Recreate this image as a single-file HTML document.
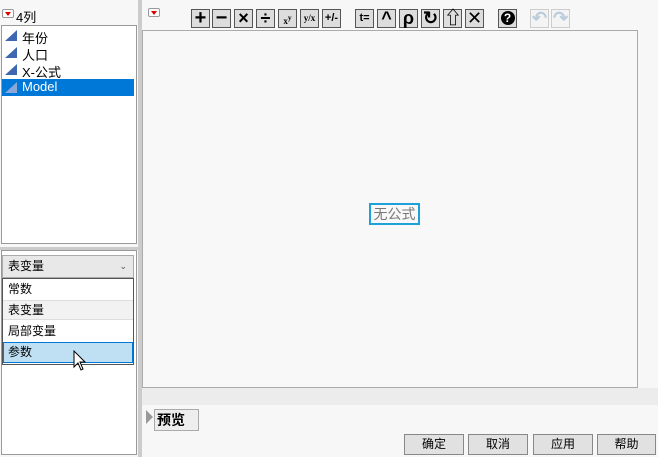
<!DOCTYPE html><html><head><meta charset="utf-8"><style>
*{box-sizing:border-box}
body{margin:0;width:658px;height:457px;background:#f7f7f7;font-family:"Liberation Sans","Noto Sans CJK SC",sans-serif;font-size:12px;position:relative;overflow:hidden;color:#000}
.a{position:absolute}
.tri{width:12px;height:9px;border:1px solid #999;border-radius:2px;background:#fff}
.tri:after{content:"";position:absolute;left:2px;top:2px;border-left:3px solid transparent;border-right:3px solid transparent;border-top:4px solid #d00}
.tb{position:absolute;top:9px;width:19px;height:19px;border:1px solid #555;background:#ddd;font-weight:bold;font-size:18px;line-height:16px;text-align:center}
.btn{position:absolute;top:434px;height:21px;border:1px solid #888;background:#e1e1e1;text-align:center;line-height:19px;font-size:12px}
.it{position:absolute;left:3px;height:20px;width:130px;line-height:20px;padding-left:5px}
.ic{position:absolute;left:5px;width:0;height:0;border-left:12px solid transparent;border-bottom:11px solid #3f66b0}
</style></head><body>
<div class="a tri" style="left:2px;top:9px"></div><div class="a" style="left:16px;top:7px;font-size:13px">4列</div>
<div class="a" style="left:1px;top:25px;width:136px;height:219px;border:1px solid #999;background:#fff"></div>
<div class="ic" style="top:30px"></div><div class="a" style="left:22px;top:28px;font-size:13px">年份</div>
<div class="ic" style="top:47px"></div><div class="a" style="left:22px;top:45px;font-size:13px">人口</div>
<div class="ic" style="top:64px"></div><div class="a" style="left:22px;top:62px;font-size:13px">X-公式</div>
<div class="a" style="left:2px;top:79px;width:132px;height:17px;background:#0078d7"></div>
<div class="a" style="left:5px;top:82px;width:0;height:0;border-left:12px solid transparent;border-bottom:11px solid #8aa8d8"></div>
<div class="a" style="left:22px;top:79px;font-size:13px;color:#fff">Model</div>
<div class="a" style="left:0;top:247px;width:138px;height:3px;background:#ccc"></div>
<div class="a" style="left:138px;top:0;width:4px;height:457px;background:#ccc"></div>
<div class="a" style="left:1px;top:250px;width:136px;height:205px;border:1px solid #999;background:#fff"></div>
<div class="a" style="left:2px;top:255px;width:132px;height:23px;border:1px solid #aaa;background:#e8e8e8;line-height:21px;padding-left:5px">表变量<span style="position:absolute;right:6px;font-size:9px;color:#555">⌄</span></div>
<div class="a" style="left:2px;top:278px;width:132px;height:87px;border:1px solid #555;background:#fff"></div>
<div class="it" style="top:279px">常数</div>
<div class="it" style="top:300px;background:#f2f2f2;border-top:1px solid #ddd;border-bottom:1px solid #ddd;line-height:18px">表变量</div>
<div class="it" style="top:321px">局部变量</div>
<div class="it" style="top:342px;background:#bfe0f3;border:1px solid #0078d7;height:21px;padding-left:4px;line-height:19px">参数</div>
<svg class="a" style="left:73px;top:350px" width="14" height="22"><path d="M1 1 L1 17 L5 13 L8 20 L10 19 L7 12 L12 12 Z" fill="#fff" stroke="#000"/></svg>
<div class="a tri" style="left:148px;top:8px"></div>
<div class="tb" style="left:191px;font-size:20px">+</div><div class="tb" style="left:212px;font-size:20px">−</div><div class="tb" style="left:234px">×</div><div class="tb" style="left:256px">÷</div>
<div class="tb" style="left:278px;font-size:9px;font-family:'Liberation Serif',serif">x<sup>y</sup></div>
<div class="tb" style="left:300px;font-size:9px;font-family:'Liberation Serif',serif">y/x</div>
<div class="tb" style="left:322px;font-size:11px">+/-</div>
<div class="tb" style="left:355px;font-size:11px">t=</div><div class="tb" style="left:377px">^</div><div class="tb" style="left:399px">ρ</div><div class="tb" style="left:421px">↻</div><div class="tb" style="left:443px">⇧</div><div class="tb" style="left:465px;font-weight:normal">✕</div>
<div class="tb" style="left:498px;font-size:12px"><span style="display:inline-block;width:14px;height:14px;border-radius:7px;background:#000;color:#fff;line-height:14px;margin-top:1px">?</span></div>
<div class="tb" style="left:530px;border-color:#ccc;background:#f4f4f4;color:#bcd">↶</div><div class="tb" style="left:551px;border-color:#ccc;background:#f4f4f4;color:#bcd">↷</div>
<div class="a" style="left:142px;top:30px;width:496px;height:358px;border:1px solid #aaa;background:#f8f8f8"></div>
<div class="a" style="left:369px;top:203px;width:51px;height:22px;border:2px solid #1ea0d8;color:#777;font-size:14px;line-height:18px;text-align:center">无公式</div>
<div class="a" style="left:142px;top:388px;width:516px;height:17px;background:#ececec"></div>
<div class="a" style="left:146px;top:410px;border-top:7px solid transparent;border-bottom:7px solid transparent;border-left:7px solid #999"></div>
<div class="a" style="left:154px;top:409px;width:45px;height:22px;border:1px solid #aaa;background:#eee;font-weight:bold;font-size:14px;line-height:20px;padding-left:2px">预览</div>
<div class="btn" style="left:404px;width:60px">确定</div><div class="btn" style="left:468px;width:60px">取消</div><div class="btn" style="left:533px;width:60px">应用</div><div class="btn" style="left:597px;width:59px">帮助</div>
</body></html>
